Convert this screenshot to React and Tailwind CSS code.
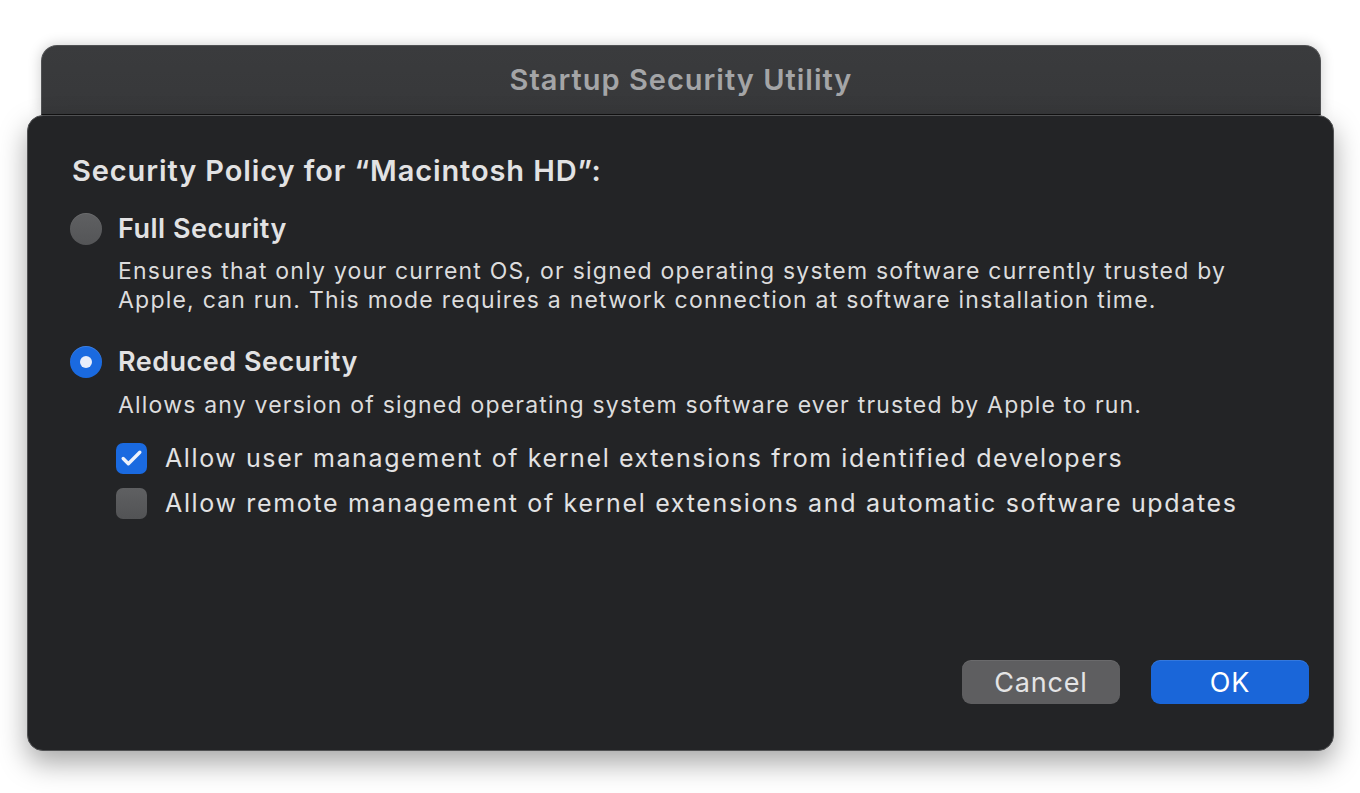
import { Check } from 'lucide-react'

function Radio({ checked }) {
  if (checked) {
    return (
      <div className="w-8 h-8 rounded-full bg-[#1a6ae0] flex items-center justify-center flex-shrink-0 shadow-[inset_0_1px_0_rgba(255,255,255,0.15)]">
        <div className="w-3 h-3 rounded-full bg-[#e8eefb]" />
      </div>
    )
  }
  return <div className="w-8 h-8 rounded-full bg-gradient-to-b from-[#5f6062] to-[#545557] flex-shrink-0 shadow-[inset_0_1px_0_rgba(255,255,255,0.08)]" />
}

function Checkbox({ checked }) {
  if (checked) {
    return (
      <div className="w-[31px] h-[31px] rounded-[7px] bg-[#1a6ae0] flex items-center justify-center flex-shrink-0">
        <Check size={25} strokeWidth={3.2} className="text-[#eef2fb]" />
      </div>
    )
  }
  return <div className="w-[31px] h-[31px] rounded-[7px] bg-gradient-to-b from-[#5f6062] to-[#525355] flex-shrink-0" />
}

export default function App() {
  return (
    <div className="w-full h-[793px] bg-white pt-[45px] font-['Inter','Liberation_Sans',sans-serif] antialiased">
      {/* back window title bar */}
      <div className="mr-[39px] ml-[41px] h-[70px] rounded-t-[16px] bg-gradient-to-b from-[#3a3b3d] to-[#37383a] border border-[#505153] border-b-[#111] flex items-center justify-center shadow-[0_0_14px_rgba(0,0,0,0.2)]">
        <span className="text-[29px] font-semibold text-[#a4a5a7] tracking-[1px]">Startup Security Utility</span>
      </div>

      {/* sheet */}
      <div className="ml-[27px] mr-[26px] h-[636px] rounded-[16px] bg-[#232426] border border-[#505153] shadow-[0_12px_28px_rgba(0,0,0,0.35)] flex flex-col pl-[44px] pr-[24px] pt-[37px] pb-[46px] text-[#e2e2e3]">
        <h1 className="text-[29px] font-semibold leading-[36px] tracking-[0.9px]">Security Policy for “Macintosh HD”:</h1>

        <div className="mt-[23px] flex items-center gap-[16px] -ml-[2px]">
          <Radio />
          <span className="text-[27px] font-semibold leading-[34px] tracking-[0.5px]">Full Security</span>
        </div>
        <p className="ml-[46px] mt-[11px] text-[23px] leading-[29px] text-[#dcdcdd] tracking-[1.22px]">
          Ensures that only your current OS, or signed operating system software currently trusted by<br />
          Apple, can run. This mode requires a network connection at software installation time.
        </p>

        <div className="mt-[30px] flex items-center gap-[16px] -ml-[2px]">
          <Radio checked />
          <span className="text-[27px] font-semibold leading-[34px] tracking-[0.5px]">Reduced Security</span>
        </div>
        <p className="ml-[46px] mt-[12px] text-[23px] leading-[29px] text-[#dcdcdd] tracking-[1.2px]">
          Allows any version of signed operating system software ever trusted by Apple to run.
        </p>

        <div className="ml-[44px] mt-[23px] flex flex-col gap-[14px]">
          <div className="flex items-center gap-[18px]">
            <Checkbox checked />
            <span className="text-[25px] leading-[31px] tracking-[1.6px]">Allow user management of kernel extensions from identified developers</span>
          </div>
          <div className="flex items-center gap-[18px]">
            <Checkbox />
            <span className="text-[25px] leading-[31px] tracking-[1.66px]">Allow remote management of kernel extensions and automatic software updates</span>
          </div>
        </div>

        <div className="mt-auto flex justify-end gap-[31px]">
          <button className="w-[158px] h-[44px] rounded-[9px] bg-[#5e5e60] text-[#e4e4e5] text-[27px] tracking-[0.8px] leading-none shadow-[inset_0_1px_0_rgba(255,255,255,0.08)]">Cancel</button>
          <button className="w-[158px] h-[44px] rounded-[9px] bg-[#1a66d9] text-white text-[27px] tracking-[0.8px] leading-none shadow-[inset_0_1px_0_rgba(255,255,255,0.12)]">OK</button>
        </div>
      </div>
    </div>
  )
}
